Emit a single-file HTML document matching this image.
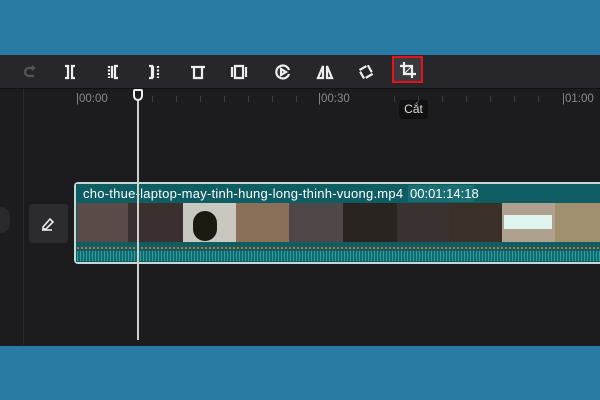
<!DOCTYPE html><html><head><style>
body{margin:0;width:600px;height:400px;overflow:hidden;background:#2a7aa6;font-family:"Liberation Sans","Noto Sans CJK SC",sans-serif;position:relative}
.a{position:absolute}
.ic{position:absolute;top:62px;width:20px;height:20px}
.ic svg{width:20px;height:20px;fill:none;stroke:#eeeeee;stroke-width:2.2}
.tk{position:absolute;top:96px;width:1px;height:6px;background:#3e3e42}
.lb{position:absolute;top:93px;font-size:11.5px;color:#8a8a8e}
.th{position:absolute;top:203px;height:39px}
</style></head><body>
<div class="a" style="left:0;top:55px;width:600px;height:33px;background:#26262b"></div>
<div class="a" style="left:0;top:88px;width:600px;height:257px;background:#1c1c1e;border-top:1px solid #111"></div>
<div class="a" style="left:23px;top:89px;width:1px;height:256px;background:#2a2a2d"></div>
<div class="ic" style="left:20px"><svg viewBox="0 0 20 20"><path d="M14 6H9a4 4 0 0 0 0 8h5" stroke="#555"/><path d="M12 4l2 2-2 2" stroke="#555"/></svg></div>
<div class="ic" style="left:60px"><svg viewBox="0 0 20 20"><path d="M5 4h3v12H5M15 4h-3v12h3"/></svg></div>
<div class="ic" style="left:103px"><svg viewBox="0 0 20 20"><path d="M6 4v12" stroke-dasharray="2 1.5"/><path d="M9 4v12M15 4h-3v12h3"/></svg></div>
<div class="ic" style="left:144px"><svg viewBox="0 0 20 20"><path d="M5 4h3v12H5M9 4v12"/><path d="M14 4v12" stroke-dasharray="2 1.5"/></svg></div>
<div class="ic" style="left:188px"><svg viewBox="0 0 20 20"><path d="M3 5h14M6 5v11h8V5"/></svg></div>
<div class="ic" style="left:229px"><svg viewBox="0 0 20 20"><path d="M3 5v10M17 5v10M6 4h8v12H6z"/></svg></div>
<div class="ic" style="left:273px"><svg viewBox="0 0 20 20"><path d="M16 8a6.5 6.5 0 1 0 0 4"/><path d="M8 7l5 3-5 3z"/></svg></div>
<div class="ic" style="left:315px"><svg viewBox="0 0 20 20"><path d="M8 4L3 16h5zM12 4l5 12h-5z"/></svg></div>
<div class="ic" style="left:356px"><svg viewBox="0 0 20 20"><path d="M10 3l7 7-7 7-7-7z" transform="rotate(15 10 10)" stroke-dasharray="8 2"/></svg></div>
<div class="a" style="left:392px;top:56px;width:31px;height:27px;border:2px solid #e5141c;box-sizing:border-box;background:#3a3a3e"></div>
<div class="ic" style="left:398px;top:60px"><svg viewBox="0 0 20 20"><path d="M6 2v12h12M2 6h12v12"/><path d="M7 13l6-6" stroke-width="1"/></svg></div>
<div class="a" style="left:399px;top:100px;width:29px;height:19px;background:#111;border-radius:3px;color:#ddd;font-size:12px;line-height:19px;text-align:center">Cắt</div>
<div class="lb" style="left:76px">|00:00</div><div class="lb" style="left:318px">|00:30</div><div class="lb" style="left:562px">|01:00</div>
<div class="tk" style="left:152px"></div><div class="tk" style="left:176px"></div><div class="tk" style="left:200px"></div><div class="tk" style="left:224px"></div><div class="tk" style="left:248px"></div><div class="tk" style="left:272px"></div><div class="tk" style="left:296px"></div>
<div class="tk" style="left:394px"></div><div class="tk" style="left:418px"></div><div class="tk" style="left:442px"></div><div class="tk" style="left:466px"></div><div class="tk" style="left:490px"></div><div class="tk" style="left:514px"></div><div class="tk" style="left:538px"></div>
<div class="a" style="left:0;top:207px;width:10px;height:26px;background:#2a2a2d;border-radius:0 12px 12px 0"></div>
<div class="a" style="left:29px;top:204px;width:39px;height:39px;background:#2c2c2f;border-radius:3px"></div>
<div class="ic" style="left:38px;top:214px"><svg viewBox="0 0 20 20"><path d="M4 16h10M5 13l7-8 3 3-7 7H5z" stroke-width="1.6"/></svg></div>
<div class="a" style="left:74px;top:182px;width:530px;height:82px;background:#c8d6d6;border-radius:4px"></div>
<div class="a" style="left:76px;top:184px;width:530px;height:78px;background:#0e5d62"></div>
<div class="a" style="left:83px;top:186px;color:#fff;font-size:13px;letter-spacing:0.25px">cho-thue-laptop-may-tinh-hung-long-thinh-vuong.mp4</div>
<div class="a" style="left:408px;top:185px;width:66px;height:17px;background:#1a6d72"></div>
<div class="a" style="left:410px;top:186px;color:#fff;font-size:13px">00:01:14:18</div>
<div class="th" style="left:77px;width:51px;background:#5a4a48"></div>
<div class="th" style="left:128px;width:55px;background:#3a3030"></div>
<div class="th" style="left:183px;width:53px;background:#c8c8c0"><div class="a" style="left:10px;top:8px;width:24px;height:30px;background:#1a1a10;border-radius:12px"></div></div>
<div class="th" style="left:236px;width:53px;background:#8a7058"></div>
<div class="th" style="left:289px;width:54px;background:#504848"></div>
<div class="th" style="left:343px;width:54px;background:#2a2420"></div>
<div class="th" style="left:397px;width:52px;background:#3a3230"></div>
<div class="th" style="left:449px;width:53px;background:#3a3028"></div>
<div class="th" style="left:502px;width:53px;background:#b0a090"><div class="a" style="left:2px;top:12px;width:48px;height:14px;background:#e0f4f0"></div></div>
<div class="th" style="left:555px;width:45px;background:#a09070"></div>
<div class="a" style="left:77px;top:247px;width:523px;height:2px;background:repeating-linear-gradient(90deg,#d06a30 0 2px,#0e5d62 2px 4px)"></div>
<div class="a" style="left:77px;top:251px;width:523px;height:10px;background:repeating-linear-gradient(90deg,#2f9ea0 0 1px,#136a6e 1px 3px)"></div>
<div class="a" style="left:137px;top:100px;width:2px;height:240px;background:#cfcfcf"></div>
<div class="a" style="left:133px;top:89px;width:10px;height:12px;border:2px solid #eee;border-radius:2px 2px 5px 5px;box-sizing:border-box;background:#1c1c1e"></div>
</body></html>
